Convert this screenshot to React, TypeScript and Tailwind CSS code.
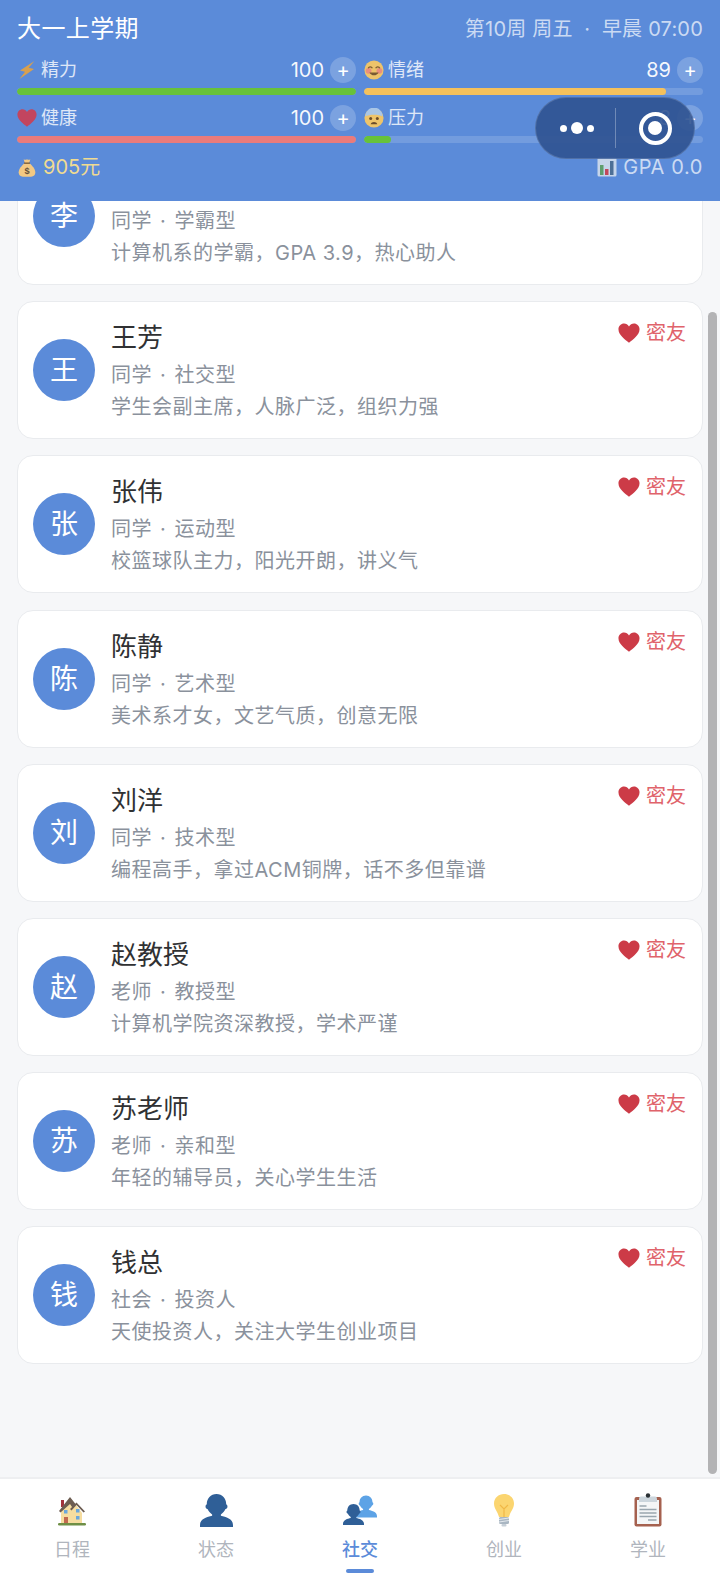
import React from 'react';

const friends = [
  { name: '李明', role: '同学\u00a0·\u00a0学霸型', desc: '计算机系的学霸，GPA 3.9，热心助人' },
  { name: '王芳', role: '同学\u00a0·\u00a0社交型', desc: '学生会副主席，人脉广泛，组织力强' },
  { name: '张伟', role: '同学\u00a0·\u00a0运动型', desc: '校篮球队主力，阳光开朗，讲义气' },
  { name: '陈静', role: '同学\u00a0·\u00a0艺术型', desc: '美术系才女，文艺气质，创意无限' },
  { name: '刘洋', role: '同学\u00a0·\u00a0技术型', desc: '编程高手，拿过ACM铜牌，话不多但靠谱' },
  { name: '赵教授', role: '老师\u00a0·\u00a0教授型', desc: '计算机学院资深教授，学术严谨' },
  { name: '苏老师', role: '老师\u00a0·\u00a0亲和型', desc: '年轻的辅导员，关心学生生活' },
  { name: '钱总', role: '社会\u00a0·\u00a0投资人', desc: '天使投资人，关注大学生创业项目' },
];

const HEART = 'M12 22.500C8 19 .5 14.500 .5 7.800 .5 4.200 3.300 1.500 6.600 1.500 8.800 1.500 10.800 2.800 12 4.800 13.200 2.800 15.200 1.500 17.400 1.500 20.700 1.500 23.500 4.200 23.500 7.800 23.500 14.500 16 19 12 22.500Z';

function Bolt() {
  return (
    <svg viewBox="0 0 16 18" className="w-4 h-[18px]">
      <path d="M15.500 0 1 9.500l5 1.300L.5 18 15 8l-5.300-1.300Z" fill="#d8a04f" />
    </svg>
  );
}

function Heart({ color, className }: { color: string; className: string }) {
  return (
    <svg viewBox="0 0 24 24" className={className}>
      <path d={HEART} fill={color} />
    </svg>
  );
}

function Smile() {
  return (
    <svg viewBox="0 0 24 24" className="w-5 h-5">
      <circle cx="12" cy="12" r="11.500" fill="#eec46a" />
      <circle cx="5.500" cy="13" r="3.500" fill="#ea8f7e" />
      <circle cx="18.500" cy="13" r="3.500" fill="#ea8f7e" />
      <path d="M5 10c1-2.500 4-2.500 5 0M14 10c1-2.500 4-2.500 5 0" stroke="#7a5a32" strokeWidth="1.500" fill="none" />
      <path d="M6.500 15c2 4.500 9 4.500 11 0Z" fill="#7a5a32" />
    </svg>
  );
}

function Anxious() {
  return (
    <svg viewBox="0 0 24 24" className="w-5 h-5">
      <circle cx="12" cy="12" r="11.500" fill="#eec46a" />
      <path d="M1.500 10A10.500 10.500 0 0 1 22.500 10C18 7.500 6 7.500 1.500 10Z" fill="#a9c6e6" />
      <circle cx="8" cy="12.500" r="1.800" fill="#6b4c2a" />
      <circle cx="16" cy="12.500" r="1.800" fill="#6b4c2a" />
      <path d="M8 19.500c1-3.500 7-3.500 8 0Z" fill="#6b4c2a" />
    </svg>
  );
}

function MoneyBag() {
  return (
    <svg viewBox="0 0 24 24" className="w-5 h-[23px]">
      <path d="M8 2c1.500.8 2.500.8 4 0 1.500.8 2.500.8 4 0l-1.500 5h-5Z" fill="#f3c983" />
      <path d="M9 7h6c3 2.500 7 7 7 11 0 3-2 5-5 5H7c-3 0-5-2-5-5 0-4 4-8.500 7-11Z" fill="#f3c983" />
      <rect x="8.500" y="6" width="7" height="1.600" fill="#7a5a32" />
      <text x="12" y="19.500" textAnchor="middle" fontSize="11" fontWeight="700" fill="#66513a" fontFamily="Liberation Sans, sans-serif">$</text>
    </svg>
  );
}

function Chart() {
  return (
    <svg viewBox="0 0 20 20" className="w-5 h-5">
      <rect x="0.500" y="0.500" width="19" height="19" rx="1.500" fill="#c6d5ea" />
      <rect x="3" y="8" width="3.500" height="10" fill="#5f9e6e" />
      <rect x="8" y="12" width="3.500" height="6" fill="#c2485a" />
      <rect x="13" y="4" width="3.500" height="14" fill="#4d6f96" />
    </svg>
  );
}

function Stat({ icon, label, value, pct, color }: { icon: React.ReactNode; label: string; value: number; pct: number; color: string }) {
  return (
    <div>
      <div className="flex items-center h-[26px]">
        <span className="w-5 flex justify-center shrink-0">{icon}</span>
        <span className="ml-1 text-[18px] leading-[26px] text-white/80">{label}</span>
        <span className="ml-auto text-[20px] leading-[26px] text-white/95">{value}</span>
        <span className="ml-[6px] w-[26px] h-[26px] rounded-full bg-white/20 flex items-center justify-center text-[20px] leading-none text-white">+</span>
      </div>
      <div className="mt-[5px] h-[7px] rounded-full bg-white/15 overflow-hidden">
        <div className="h-full rounded-full" style={{ width: `${pct}%`, backgroundColor: color }} />
      </div>
    </div>
  );
}

function Header() {
  return (
    <header className="relative z-10 h-[201px] shrink-0 bg-[#5b8bd9] px-[17px] pt-3">
      <div className="flex items-center justify-between h-[34px]">
        <span className="text-[24px] leading-[34px] tracking-[0.4px] text-white">大一上学期</span>
        <span className="text-[20px] leading-[34px] tracking-[0.2px] text-white/70">第10周 周五{'\u00a0\u00a0'}·{'\u00a0\u00a0'}早晨 07:00</span>
      </div>
      <div className="mt-[11px] grid grid-cols-2 gap-x-2 gap-y-[10px]">
        <Stat icon={<Bolt />} label="精力" value={100} pct={100} color="#67c23a" />
        <Stat icon={<Smile />} label="情绪" value={89} pct={89} color="#f5c15c" />
        <Stat icon={<Heart color="#c2455f" className="w-5 h-5" />} label="健康" value={100} pct={100} color="#ea7b7b" />
        <Stat icon={<Anxious />} label="压力" value={8} pct={8} color="#67c23a" />
      </div>
      <div className="mt-[11px] flex items-center justify-between h-[26px]">
        <div className="flex items-center gap-[6px]">
          <MoneyBag />
          <span className="text-[20px] leading-[26px] text-[#f0db91]">905元</span>
        </div>
        <div className="flex items-center gap-[6px]">
          <Chart />
          <span className="text-[20px] leading-[26px] tracking-[0.6px] text-white/70">GPA 0.0</span>
        </div>
      </div>
      <Capsule />
    </header>
  );
}

function Capsule() {
  return (
    <div className="absolute left-[535px] top-[97px] w-[160px] h-[62px] rounded-full bg-[#2f5290]/90 border border-white/15 flex items-center">
      <div className="w-[79px] flex items-center justify-center gap-[4px] pl-[2px]">
        <span className="w-[7px] h-[7px] rounded-full bg-white" />
        <span className="w-[12px] h-[12px] rounded-full bg-white" />
        <span className="w-[7px] h-[7px] rounded-full bg-white" />
      </div>
      <div className="w-px h-[40px] bg-white/30" />
      <div className="flex-1 flex items-center justify-center">
        <div className="w-[33px] h-[33px] rounded-full border-[4px] border-white flex items-center justify-center">
          <span className="w-[14px] h-[14px] rounded-full bg-white" />
        </div>
      </div>
    </div>
  );
}

function FriendCard({ name, role, desc }: { name: string; role: string; desc: string }) {
  return (
    <div className="h-[138px] bg-white border border-[#e9ebee] rounded-[16px] pl-[15px] pr-4 flex items-center">
      <div className="w-[62px] h-[62px] rounded-full bg-[#5b8bd9] flex items-center justify-center text-white text-[28px] shrink-0">
        {name[0]}
      </div>
      <div className="ml-4 flex-1 self-start pt-[19px]">
        <div className="text-[26px] leading-[34px] text-[#303133]">{name}</div>
        <div className="mt-[4px] text-[20px] leading-[32px] tracking-[0.5px] [word-spacing:2px] text-[#8a919c]">{role}</div>
        <div className="text-[20px] leading-[32px] tracking-[0.5px] text-[#8a919c]">{desc}</div>
      </div>
      <div className="self-start mt-[17px] flex items-center gap-[6px]">
        <Heart color="#cc3b47" className="w-[22px] h-[22px]" />
        <span className="text-[20px] leading-[28px] text-[#e0636b]">密友</span>
      </div>
    </div>
  );
}

function HouseIcon() {
  return (
    <svg viewBox="0 0 30 32" className="w-[30px] h-8">
      <rect x="4" y="6" width="3" height="7" fill="#a3333d" />
      <path d="M4 15 13 4l6 7 6 8v10H4Z" fill="#f6dda0" />
      <path d="M2 17 13 3l5.500 7L15 13l-2-3L3.500 18.500ZM13 15l6.500-6.500L28 17.500 26.500 18.500 19.500 11 14.500 16.500Z" fill="#6d5d52" />
      <rect x="7" y="16" width="3.500" height="3.500" fill="#6aa7dc" />
      <rect x="19" y="15" width="3.500" height="3.500" fill="#6aa7dc" />
      <rect x="19" y="22" width="3.500" height="3.500" fill="#6aa7dc" />
      <rect x="7" y="23" width="4" height="6" fill="#c1694f" />
      <rect x="1" y="29" width="28" height="2.500" rx="1.200" fill="#6f8f46" />
    </svg>
  );
}

function PersonIcon({ color, className }: { color: string; className: string }) {
  return (
    <svg viewBox="0 0 34 34" className={className}>
      <path
        d="M17 0c6 0 10 4.500 10 10.500 .9.500 1.300 1.300 1.300 2.300 0 1.300-.8 2.400-2 2.700-1 2.200-2.800 4.200-4.800 5.500v1.500c5 1 12.500 3.200 12.500 9.500v2H0v-2c0-6.300 7.500-8.500 12.500-9.500V21c-2-1.300-3.800-3.300-4.800-5.500-1.200-.3-2-1.400-2-2.700 0-1 .4-1.800 1.300-2.300C7 4.500 11 0 17 0Z"
        fill={color}
      />
    </svg>
  );
}

function SocialIcon() {
  return (
    <div className="relative w-[34px] h-[33px]">
      <PersonIcon color="#5da3e6" className="absolute right-0 top-0 w-[22px] h-[25px]" />
      <PersonIcon color="#2f5f97" className="absolute left-0 bottom-0 w-[21px] h-[25px]" />
    </div>
  );
}

function BulbIcon() {
  return (
    <svg viewBox="0 0 22 34" className="w-[22px] h-[34px]">
      <path d="M11 1C5.500 1 1 5 1 10.500c0 5 3.500 7.500 5 13.500h10c1.500-6 5-8.500 5-13.500C21 5 16.500 1 11 1Z" fill="#fbd570" />
      <path d="M7 12l4 4 4-4M11 16v8" stroke="#f0b847" strokeWidth="1.200" fill="none" />
      <rect x="6" y="24" width="10" height="7" rx="1.500" fill="#a9b6c2" />
      <path d="M6 26.500 16 25M6 29 16 27.500" stroke="#e4e9ee" strokeWidth="1" />
      <rect x="8.500" y="31" width="5" height="2.500" rx="1" fill="#c6cfd7" />
    </svg>
  );
}

function ClipboardIcon() {
  return (
    <svg viewBox="0 0 28 34" className="w-7 h-[34px]">
      <rect x="0.500" y="4" width="27" height="29.500" rx="2" fill="#a5614f" />
      <rect x="3" y="7" width="22" height="24" fill="#f4f6f7" />
      <path d="M7 3.500h14a2 2 0 0 1 2 2V9H5V5.500a2 2 0 0 1 2-2Z" fill="#ccd6dd" />
      <circle cx="14" cy="2.500" r="2.200" fill="#292f33" />
      <path d="M5.500 13h7M5.500 16.500h17M5.500 20h17M5.500 23.500h17M14 27h8.500" stroke="#99a6af" strokeWidth="1.400" />
    </svg>
  );
}

function TabBar() {
  const tabs = [
    { label: '日程', icon: <HouseIcon /> },
    { label: '状态', icon: <PersonIcon color="#2f5f97" className="w-[33px] h-[33px]" /> },
    { label: '社交', icon: <SocialIcon />, active: true },
    { label: '创业', icon: <BulbIcon /> },
    { label: '学业', icon: <ClipboardIcon /> },
  ];
  return (
    <nav className="shrink-0 h-[105px] bg-white border-t-2 border-[#eeeff1] grid grid-cols-5">
      {tabs.map((t) => (
        <div key={t.label} className="flex flex-col items-center pt-[14px]">
          <div className="h-[34px] flex items-center justify-center">{t.icon}</div>
          <span className={t.active ? 'mt-[10px] text-[18px] leading-[26px] font-medium text-[#5b8bd9]' : 'mt-[10px] text-[18px] leading-[26px] text-[#b0b5bd]'}>
            {t.label}
          </span>
          {t.active && <span className="mt-[6px] w-7 h-[4px] rounded-full bg-[#5b8bd9]" />}
        </div>
      ))}
    </nav>
  );
}

export default function App() {
  return (
    <div className="relative w-[720px] h-[1582px] flex flex-col overflow-hidden bg-[#f6f7f9] font-[Inter,'Noto_Sans_CJK_SC',sans-serif]">
      <Header />
      <main className="relative flex-1 overflow-hidden">
        {/* list is scrolled down a little */}
        <div className="-mt-[54px] px-[17px] flex flex-col gap-[16.2px]">
          {friends.map((f) => (
            <FriendCard key={f.name} {...f} />
          ))}
        </div>
        <div className="absolute right-[3px] top-[111px] bottom-[3px] w-[9px] rounded-full bg-[#b3b3b5]" />
      </main>
      <TabBar />
    </div>
  );
}
